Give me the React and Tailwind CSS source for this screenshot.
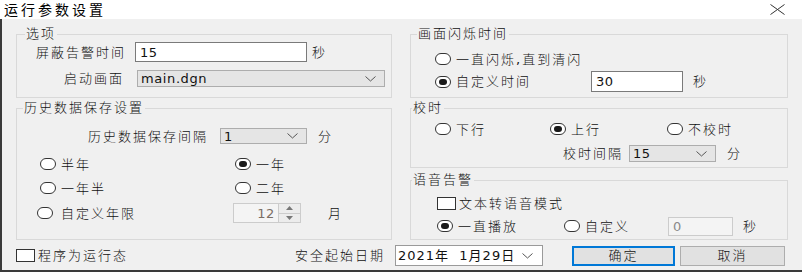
import React from 'react';

function Radio({ checked }) {
    return (
        <span className="flex h-[12px] w-[16px] shrink-0 items-center justify-center rounded-full border border-[#333] bg-white">
            {checked && <span className="h-[6px] w-[8px] rounded-full bg-[#1a1a1a]"></span>}
        </span>
    );
}

function RadioItem({ checked, label, className = '' }) {
    return (
        <div className={`flex shrink-0 items-center gap-[5px] ${className}`}>
            <Radio checked={checked} />
            <span className="tracking-[2px]">{label}</span>
        </div>
    );
}

function Check({ label, className = '' }) {
    return (
        <div className={`flex shrink-0 items-center gap-[3px] ${className}`}>
            <span className="h-[13px] w-[19px] shrink-0 border border-[#333] bg-white"></span>
            <span className="tracking-[2px]">{label}</span>
        </div>
    );
}

function Chevron() {
    return (
        <svg width="11" height="6" viewBox="0 0 11 6" className="shrink-0">
            <polyline points="0.5,0.5 5.5,5 10.5,0.5" fill="none" stroke="#555" strokeWidth="1" />
        </svg>
    );
}

function Combo({ value, className = '' }) {
    return (
        <div className={`flex shrink-0 items-center justify-between border border-[#adadad] bg-[#e5e5e5] pl-[3px] pr-[8px] ${className}`}>
            <span className="font-normal tracking-[0.6px]">{value}</span>
            <Chevron />
        </div>
    );
}

function Group({ label, className = '', labelPos = 'left-[6px]', children }) {
    return (
        <div className={`relative flex flex-col border border-[#d9d9d9] ${className}`}>
            <span className={`absolute -top-[9px] ${labelPos} bg-[#f0f0f0] px-[1px] leading-[16px] tracking-[2px]`}>{label}</span>
            {children}
        </div>
    );
}

export default function App() {
    return (
        <div className="h-[274px] w-[802px] overflow-hidden bg-white font-['DejaVu_Sans','Noto_Sans_CJK_SC',sans-serif] text-[13px] font-light leading-none text-[#111]">
            {/* title bar */}
            <div className="flex h-[19px] items-center justify-between pl-[4px] pr-[17px]">
                <span className="text-[14px] font-normal tracking-[3px] text-black">运行参数设置</span>
                <svg width="15" height="11" viewBox="0 0 15 11">
                    <line x1="0.5" y1="0.5" x2="14.5" y2="10.5" stroke="#333" strokeWidth="1" />
                    <line x1="14.5" y1="0.5" x2="0.5" y2="10.5" stroke="#333" strokeWidth="1" />
                </svg>
            </div>

            <div className="flex h-[253px] flex-col border-b-2 border-l-2 border-[#3a3a3a] bg-[#f0f0f0] pl-[14px] pt-[15px]">
                <div className="flex">
                    {/* left column */}
                    <div className="flex w-[376px] shrink-0 flex-col">
                        <Group label="选项" labelPos="left-[8px]" className="h-[64px]">
                            <div className="mt-[7px] flex h-[20px] items-center pl-[19px]">
                                <span className="w-[99px] shrink-0 tracking-[2px]">屏蔽告警时间</span>
                                <div className="flex h-[20px] w-[172px] shrink-0 items-center border border-[#7a7a7a] bg-white pl-[4px] font-normal tracking-[0.6px]">15</div>
                                <span className="ml-[5px]">秒</span>
                            </div>
                            <div className="mt-[8px] flex h-[17px] items-center pl-[47px]">
                                <span className="w-[73px] shrink-0 tracking-[2px]">启动画面</span>
                                <Combo value="main.dgn" className="h-[17px] w-[248px]" />
                            </div>
                        </Group>

                        <Group label="历史数据保存设置" className="mt-[10px] h-[132px]">
                            <div className="mt-[19px] flex h-[16px] items-center pl-[71px]">
                                <span className="w-[132px] shrink-0 tracking-[2px]">历史数据保存间隔</span>
                                <Combo value="1" className="h-[16px] w-[87px]" />
                                <span className="ml-[11px]">分</span>
                            </div>
                            <div className="mt-[10px] flex h-[20px] items-center pl-[23px]">
                                <RadioItem label="半年" className="w-[195px]" />
                                <RadioItem label="一年" checked />
                            </div>
                            <div className="mt-[4px] flex h-[20px] items-center pl-[23px]">
                                <RadioItem label="一年半" className="w-[195px]" />
                                <RadioItem label="二年" />
                            </div>
                            <div className="mt-[5px] flex h-[20px] items-center pl-[20px]">
                                <RadioItem label="自定义年限" className="w-[196px] gap-[8px]" />
                                <div className="flex h-[20px] w-[68px] shrink-0 border border-[#cccccc] bg-[#f4f4f4]">
                                    <span className="flex flex-1 items-center justify-end pr-[3px] font-normal tracking-[0.6px] text-[#7a6e64]">12</span>
                                    <div className="flex w-[22px] flex-col border-l border-[#cccccc]">
                                        <div className="flex flex-1 items-center justify-center border-b border-[#cccccc] bg-[#ececec]">
                                            <svg width="7" height="4" viewBox="0 0 7 4"><polygon points="0,4 3.5,0 7,4" fill="#777" /></svg>
                                        </div>
                                        <div className="flex flex-1 items-center justify-center bg-[#ececec]">
                                            <svg width="7" height="4" viewBox="0 0 7 4"><polygon points="0,0 3.5,4 7,0" fill="#777" /></svg>
                                        </div>
                                    </div>
                                </div>
                                <span className="ml-[27px]">月</span>
                            </div>
                        </Group>
                    </div>

                    {/* right column */}
                    <div className="ml-[18px] flex w-[378px] shrink-0 flex-col">
                        <Group label="画面闪烁时间" className="h-[64px]">
                            <div className="mt-[14px] flex h-[20px] items-center pl-[24px]">
                                <RadioItem label={<>一直闪烁<span className="font-normal">,</span>直到清闪</>} />
                            </div>
                            <div className="mt-[2px] flex h-[21px] items-center pl-[24px]">
                                <RadioItem label="自定义时间" checked className="w-[156px]" />
                                <div className="flex h-[21px] w-[92px] shrink-0 items-center border border-[#7a7a7a] bg-white pl-[4px] font-normal tracking-[0.6px]">30</div>
                                <span className="ml-[10px]">秒</span>
                            </div>
                        </Group>

                        <Group label="校时" labelPos="left-[1px]" className="mt-[10px] h-[60px]">
                            <div className="mt-[10px] flex h-[20px] items-center pl-[24px]">
                                <RadioItem label="下行" className="w-[115px]" />
                                <RadioItem label="上行" checked className="w-[117px]" />
                                <RadioItem label="不校时" />
                            </div>
                            <div className="mt-[6px] flex h-[17px] items-center pl-[152px]">
                                <span className="w-[66px] shrink-0 tracking-[2px]">校时间隔</span>
                                <Combo value="15" className="h-[17px] w-[87px]" />
                                <span className="ml-[11px]">分</span>
                            </div>
                        </Group>

                        <Group label="语音告警" labelPos="left-[1px]" className="mt-[12px] h-[60px]">
                            <div className="mt-[14px] flex h-[16px] items-center pl-[26px]">
                                <Check label="文本转语音模式" />
                            </div>
                            <div className="mt-[5px] flex h-[20px] items-center pl-[26px]">
                                <RadioItem label="一直播放" checked className="w-[127px]" />
                                <RadioItem label="自定义" className="w-[104px]" />
                                <div className="flex h-[19px] w-[65px] shrink-0 items-center border border-[#cccccc] bg-[#f4f4f4] pl-[4px] font-normal text-[#8a8a8a]">0</div>
                                <span className="ml-[10px]">秒</span>
                            </div>
                        </Group>
                    </div>
                </div>

                {/* bottom row */}
                <div className="mt-[5px] flex h-[21px] items-center">
                    <Check label="程序为运行态" className="w-[279px]" />
                    <span className="w-[100px] shrink-0 tracking-[2px]">安全起始日期</span>
                    <div className="flex h-[21px] w-[148px] shrink-0 items-center justify-between border border-[#9a9a9a] bg-white pl-[2px] pr-[9px]">
                        <span className="font-normal tracking-[1px]">2021年&nbsp;&nbsp;1月29日</span>
                        <Chevron />
                    </div>
                    <button className="ml-[29px] flex h-[20px] w-[103px] shrink-0 items-center justify-center border-2 border-[#0078d7] bg-[#e1e1e1] tracking-[2px]">确定</button>
                    <button className="ml-[5px] flex h-[20px] w-[105px] shrink-0 items-center justify-center border border-[#adadad] bg-[#e1e1e1] tracking-[2px]">取消</button>
                </div>
            </div>
        </div>
    );
}
